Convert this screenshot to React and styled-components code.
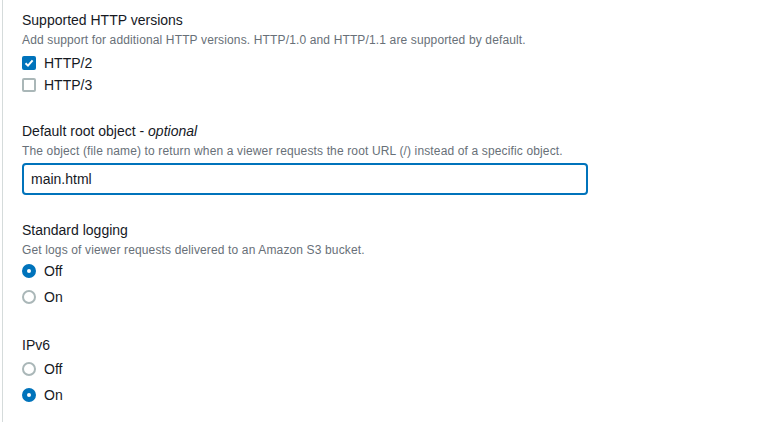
import React, { useState } from "react";
import styled, { createGlobalStyle } from "styled-components";

const GlobalStyle = createGlobalStyle`
  body {
    margin: 0;
    background: #ffffff;
    font-family: "Liberation Sans", Arial, sans-serif;
    color: #16191f;
  }
`;

const Page = styled.div`
  margin-left: 2px;
  min-height: 422px;
  border-left: 1px solid #d5dbdb;
  padding: 10px 0 0 19px;
  box-sizing: border-box;
  display: flex;
  flex-direction: column;
  gap: 25px;
`;

const Field = styled.div`
  display: flex;
  flex-direction: column;
`;

const Label = styled.div`
  font-size: 14px;
  line-height: 20px;
  color: #16191f;
  margin-bottom: ${props => props.gap || 0}px;

  em {
    font-style: italic;
  }
`;

const Description = styled.div`
  font-size: 12px;
  line-height: 16px;
  letter-spacing: 0.14px;
  color: #687078;
  margin-top: 2px;
  margin-bottom: ${props => (props.gap === undefined ? 4 : props.gap)}px;
`;

const OptionRow = styled.label`
  display: flex;
  align-items: center;
  gap: 8px;
  height: ${props => (props.radio ? 26 : 22)}px;
  font-size: 14px;
  color: #16191f;
  cursor: pointer;
`;

const Box = styled.span`
  width: 14px;
  height: 14px;
  box-sizing: border-box;
  border-radius: 2px;
  display: flex;
  align-items: center;
  justify-content: center;
  background: ${props => (props.checked ? "#0073bb" : "#ffffff")};
  border: ${props => (props.checked ? "none" : "2px solid #aab7b8")};
`;

const Dot = styled.span`
  width: 14px;
  height: 14px;
  box-sizing: border-box;
  border-radius: 50%;
  background: #ffffff;
  border: ${props =>
    props.checked ? "5px solid #0073bb" : "2px solid #aab7b8"};
`;

const TextInput = styled.input`
  width: 566px;
  height: 32px;
  box-sizing: border-box;
  border: 2px solid #0073bb;
  border-radius: 4px;
  padding: 0 7px;
  font-family: inherit;
  font-size: 14px;
  color: #16191f;
  outline: none;
`;

const Checkbox = ({ checked, label, onToggle }) => (
  <OptionRow onClick={onToggle}>
    <Box checked={checked}>
      {checked && (
        <svg width="10" height="10" viewBox="0 0 10 10">
          <polyline
            points="1.5,5.2 4,7.6 8.6,2.4"
            fill="none"
            stroke="#ffffff"
            strokeWidth="2"
          />
        </svg>
      )}
    </Box>
    {label}
  </OptionRow>
);

const Radio = ({ checked, label, onSelect }) => (
  <OptionRow radio onClick={onSelect}>
    <Dot checked={checked} />
    {label}
  </OptionRow>
);

export default function App() {
  const [http2, setHttp2] = useState(true);
  const [http3, setHttp3] = useState(false);
  const [rootObject, setRootObject] = useState("main.html");
  const [logging, setLogging] = useState("off");
  const [ipv6, setIpv6] = useState("on");

  return (
    <>
      <GlobalStyle />
      <Page>
        <Field>
          <Label>Supported HTTP versions</Label>
          <Description>
            Add support for additional HTTP versions. HTTP/1.0 and HTTP/1.1 are
            supported by default.
          </Description>
          <Checkbox checked={http2} label="HTTP/2" onToggle={() => setHttp2(!http2)} />
          <Checkbox checked={http3} label="HTTP/3" onToggle={() => setHttp3(!http3)} />
        </Field>

        <Field>
          <Label>
            Default root object - <em>optional</em>
          </Label>
          <Description>
            The object (file name) to return when a viewer requests the root URL
            (/) instead of a specific object.
          </Description>
          <TextInput
            value={rootObject}
            onChange={e => setRootObject(e.target.value)}
          />
        </Field>

        <Field>
          <Label>Standard logging</Label>
          <Description gap={0}>
            Get logs of viewer requests delivered to an Amazon S3 bucket.
          </Description>
          <Radio checked={logging === "off"} label="Off" onSelect={() => setLogging("off")} />
          <Radio checked={logging === "on"} label="On" onSelect={() => setLogging("on")} />
        </Field>

        <Field>
          <Label gap={1}>IPv6</Label>
          <Radio checked={ipv6 === "off"} label="Off" onSelect={() => setIpv6("off")} />
          <Radio checked={ipv6 === "on"} label="On" onSelect={() => setIpv6("on")} />
        </Field>
      </Page>
    </>
  );
}
